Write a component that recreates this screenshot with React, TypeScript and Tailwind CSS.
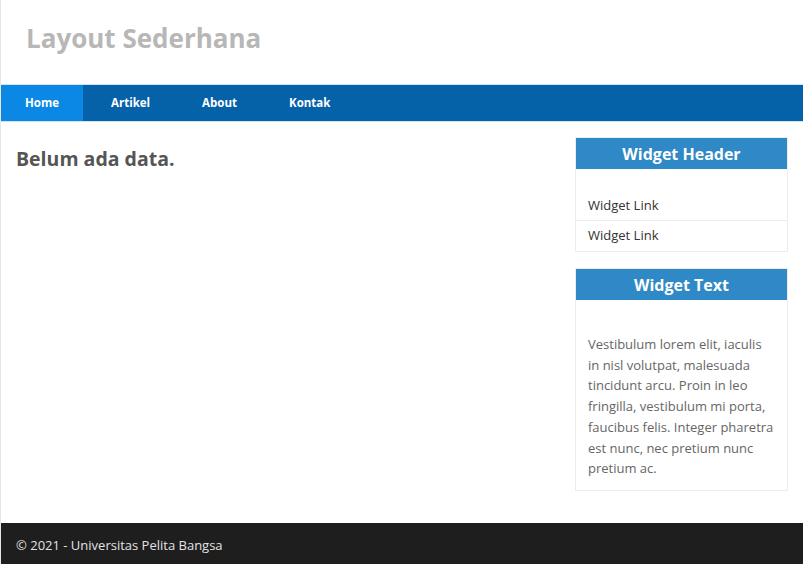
const menu = ["Home", "Artikel", "About", "Kontak"];

const links = ["Widget Link", "Widget Link"];

export default function App() {
  return (
    <div
      className="bg-white border-l border-[#e6e6e6] flex flex-col"
      style={{ fontFamily: '"Open Sans", "Noto Sans", sans-serif' }}
    >
      <header className="h-[84px] flex items-center px-[25px] pb-[9px]">
        <h1 className="text-[26px] font-bold text-[#b7b7b7] leading-none">Layout Sederhana</h1>
      </header>

      <nav className="bg-[#0561a8] border-y border-[#d3e4f3] h-[38px] flex gap-[4px]">
        {menu.map((item, i) => (
          <a
            key={item}
            href="#"
            className={`px-[24px] flex items-center text-[11.5px] font-bold text-white ${
              i === 0 ? "bg-[#0a88e4]" : ""
            }`}
          >
            {item}
          </a>
        ))}
      </nav>

      <div className="flex pt-[15px] pb-[32px]">
        <main className="flex-1 px-[15px]">
          <h2 className="text-[19.5px] font-bold text-[#555] mt-[7px]">Belum ada data.</h2>
        </main>

        <aside className="w-[213px] mr-[15px] flex flex-col gap-[16px]">
          <div className="border border-[#ececec]">
            <div className="bg-[#2f89c7] h-[31px] flex items-center justify-center text-white font-bold text-[16px]">
              Widget Header
            </div>
            <ul className="pt-[22px]">
              {links.map((l, i) => (
                <li
                  key={i}
                  className={`px-[12px] h-[30px] flex items-center text-[13px] text-[#333] ${
                    i < links.length - 1 ? "border-b border-[#ececec]" : ""
                  }`}
                >
                  {l}
                </li>
              ))}
            </ul>
          </div>

          <div className="border border-[#ececec]">
            <div className="bg-[#2f89c7] h-[31px] flex items-center justify-center text-white font-bold text-[16px]">
              Widget Text
            </div>
            <p className="px-[12px] pt-[34px] pb-[11px] text-[13px] leading-[20.7px] text-[#666]">
              Vestibulum lorem elit, iaculis in nisl volutpat, malesuada tincidunt arcu. Proin in leo
              fringilla, vestibulum mi porta, faucibus felis. Integer pharetra est nunc, nec pretium
              nunc pretium ac.
            </p>
          </div>
        </aside>
      </div>

      <footer className="bg-[#1e1e1e] h-[46px] flex items-center px-[15px] text-[13px] text-[#e2e2e2]">
        © 2021 - Universitas Pelita Bangsa
      </footer>
    </div>
  );
}
